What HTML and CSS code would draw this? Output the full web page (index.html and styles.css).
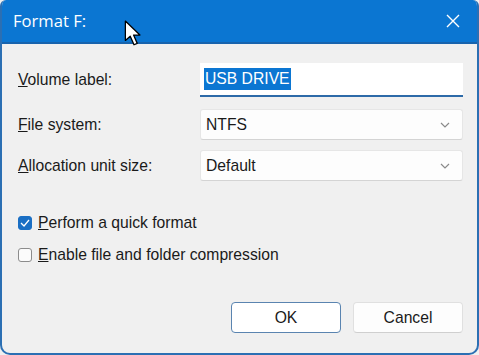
FILE: index.html
```html
<!DOCTYPE html>
<html>
<head>
<meta charset="utf-8">
<link rel="stylesheet" href="styles.css">
</head>
<body>
<div class="window">
  <div class="titlebar">
    <span class="title">Format F:</span>
    <svg class="close" width="14" height="14" viewBox="0 0 14 14"><path d="M1 1 L13 13 M13 1 L1 13" stroke="#fff" stroke-width="1.4" fill="none"/></svg>
  </div>
  <div class="content">
    <div class="form">
      <label class="lbl"><u>V</u>olume label:</label>
      <div class="input"><span class="sel">USB DRIVE</span></div>
      <label class="lbl"><u>F</u>ile system:</label>
      <div class="select"><span>NTFS</span><svg class="chev" width="10" height="6" viewBox="0 0 10 6"><path d="M1 1 L5 5 L9 1" stroke="#8a8a8a" stroke-width="1.2" fill="none"/></svg></div>
      <label class="lbl"><u>A</u>llocation unit size:</label>
      <div class="select"><span>Default</span><svg class="chev" width="10" height="6" viewBox="0 0 10 6"><path d="M1 1 L5 5 L9 1" stroke="#8a8a8a" stroke-width="1.2" fill="none"/></svg></div>
    </div>
    <div class="checks">
      <div class="check"><span class="box on"><svg width="10" height="8" viewBox="0 0 10 8"><path d="M1 4 L4 7 L9 1" stroke="#fff" stroke-width="1.3" fill="none"/></svg></span><span><u>P</u>erform a quick format</span></div>
      <div class="check"><span class="box"></span><span><u>E</u>nable file and folder compression</span></div>
    </div>
    <div class="buttons">
      <div class="btn primary">OK</div>
      <div class="btn">Cancel</div>
    </div>
  </div>
  <svg class="cursor" width="20" height="28" viewBox="0 0 18 26"><path d="M1 1 L1 19 L5.5 15 L9 23 L12 21.7 L8.6 14 L14.5 14 Z" fill="#fff" stroke="#000" stroke-width="1.2" stroke-linejoin="round"/></svg>
</div>
</body>
</html>
```
FILE: styles.css
```css
html, body {
  margin: 0;
  padding: 0;
  background: #f0f0f0;
}
body {
  font-family: "Liberation Sans", Arial, sans-serif;
  font-size: 15.7px;
  color: #1a1a1a;
}
.window {
  position: relative;
  width: 479px;
  height: 355px;
  box-sizing: border-box;
  background: #f0f0f0;
  border-radius: 6px 6px 10px 10px;
  border-left: 2px solid #2b6fb3;
  border-right: 2px solid #2b6fb3;
  border-bottom: 2px solid #2b6fb3;
  overflow: hidden;
}
.titlebar {
  height: 42px;
  margin: 0 -2px;
  background: #0b76d2;
  border-bottom: 2px solid #1763ad;
  display: flex;
  align-items: center;
  justify-content: space-between;
  padding: 0 19px 0 13px;
}
.title {
  color: #fff;
  font-family: "Open Sans", "Liberation Sans", sans-serif;
  font-size: 16.6px;
  margin-top: -2px;
}
.close {
  margin-top: -1px;
}
.content {
  padding: 19px 14px 0 16px;
}
.form {
  display: grid;
  grid-template-columns: 182px 263px;
  align-items: center;
}
.input {
  height: 34px;
  box-sizing: border-box;
  background: #fff;
  border-bottom: 2px solid #2d6aa8;
  display: flex;
  align-items: center;
  padding-left: 4px;
}
.sel {
  background: #0b76d2;
  color: #fff;
  padding: 1px;
  line-height: 20px;
}
.select {
  height: 31px;
  box-sizing: border-box;
  background: #fdfdfd;
  border: 1px solid #e6e6e6;
  border-bottom-color: #d4d4d4;
  border-radius: 3px;
  display: flex;
  align-items: center;
  justify-content: space-between;
  padding: 0 12px 0 5px;
}
.input + .lbl, .input + .lbl + .select {
  margin-top: 12px;
}
.select + .lbl, .select + .lbl + .select {
  margin-top: 10px;
}
.checks {
  margin-top: 32px;
  display: flex;
  flex-direction: column;
  gap: 12px;
}
.check {
  display: flex;
  align-items: center;
  gap: 6px;
  height: 20px;
}
.box {
  width: 14px;
  height: 14px;
  box-sizing: border-box;
  border: 1px solid #8c8c8c;
  border-radius: 3px;
  background: #fbfbfb;
  display: flex;
  align-items: center;
  justify-content: center;
}
.box.on {
  background: #1a6fc4;
  border-color: #1a6fc4;
}
.buttons {
  margin-top: 37px;
  display: flex;
  justify-content: flex-end;
  gap: 12px;
}
.btn {
  width: 110px;
  height: 31px;
  box-sizing: border-box;
  border: 1px solid #e0e0e0;
  border-bottom-color: #cfcfcf;
  border-radius: 4px;
  background: #fdfdfd;
  display: flex;
  align-items: center;
  justify-content: center;
}
.btn.primary {
  border: 1px solid #5a84b0;
  background: #fff;
}
.cursor {
  position: absolute;
  left: 122px;
  top: 20px;
}
```
